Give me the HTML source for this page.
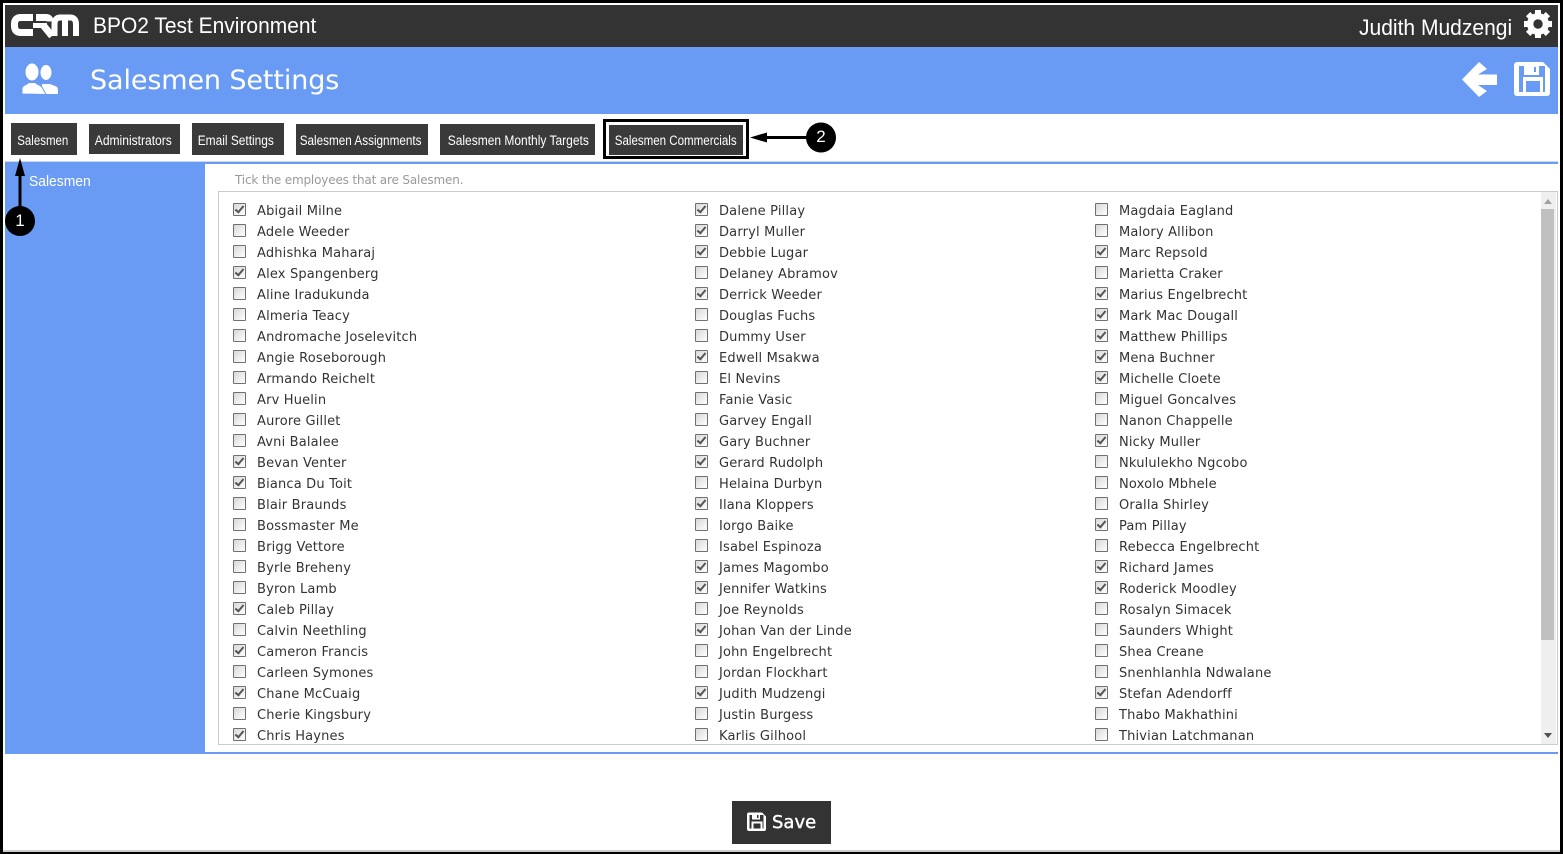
<!DOCTYPE html>
<html lang="en"><head><meta charset="utf-8"><title>Salesmen Settings</title>
<style>
html,body{margin:0;padding:0;background:#fff;overflow:hidden}
#p{position:relative;width:1563px;height:854px;overflow:hidden;background:#fff;font-family:"DejaVu Sans",Verdana,sans-serif}
.a{position:absolute}
.t{position:absolute;background:#3a3a3a;color:#fff;font:13.4px/30px "Liberation Sans",sans-serif;display:flex;justify-content:center;white-space:nowrap}
.t span{display:block;flex:none;transform:scaleX(.89)}
.n{transform-origin:0 50%;white-space:nowrap;color:#fff;font-family:"Liberation Sans",sans-serif}
.col{position:absolute}
.r{position:relative;height:21px;line-height:21px;font-size:13px;color:#333;white-space:nowrap;padding-left:24px;letter-spacing:.17px}
.r i{position:absolute;left:0;top:2px;width:11px;height:11px;border:1px solid #707070;background:linear-gradient(135deg,#d8d8d8,#fff);border-radius:1px}
.r.k i::after{content:"";position:absolute;left:3px;top:0;width:3px;height:7px;border:solid #555;border-width:0 2px 2px 0;transform:rotate(40deg)}
</style></head><body><div id="p">
<div class="a" style="left:0;top:0;width:1557px;height:847px;border:solid #000;border-width:3px 3px 0 3px"></div>
<div class="a" style="left:0;top:850px;width:1563px;height:2px;background:#ccc"></div>
<div class="a" style="left:0;top:852px;width:1563px;height:2px;background:#000"></div>
<div class="a" style="left:0;top:0;width:3px;height:854px;background:#000"></div>
<div class="a" style="left:1560px;top:0;width:3px;height:854px;background:#000"></div>
<div class="a" style="left:5px;top:5px;width:1553px;height:42px;background:#333"></div>
<div class="a" style="left:5px;top:47px;width:1553px;height:67px;background:#6a9bf4"></div>

<svg class="a" style="left:0;top:0" width="1563" height="854" viewBox="0 0 1563 854" fill="none">
<path d="M33 17.500H21q-6.500 0-6.500 6.500v2q0 6.500 6.500 6.500H33" stroke="#fff" stroke-width="7"/>
<path d="M36 17.500H46q4 0 4 4" stroke="#fff" stroke-width="7"/>
<path d="M33 25.500H47" stroke="#fff" stroke-width="5"/>
<path d="M43 25L52 36" stroke="#fff" stroke-width="7"/>
<path d="M54.500 36V24q0-6.500 6-6.500H70q6 0 6 6.500V36M65 18V36" stroke="#fff" stroke-width="6"/>
<g fill="#fff">
<ellipse cx="46" cy="72.500" rx="5.500" ry="7.500"/><path d="M42 94V84h8l5 2q3 1 3 4V94Z"/>
<ellipse cx="32" cy="72" rx="7" ry="9" stroke="#6a9bf4" stroke-width="1"/>
<path d="M22 94V89q0-3 4-4.500l3-2h6l3 2q4 1.500 5 4.500l3 5.500Z" stroke="#6a9bf4" stroke-width="1"/>
<polygon points="1462,79.500 1479,62 1487,69 1478,74.500 1497,74.500 1497,85 1478,85 1487,91 1479,97"/>
<path d="M1517 62H1543L1550 69V93a3 3 0 0 1-3 3H1517a3 3 0 0 1-3-3V65a3 3 0 0 1 3-3Z"/>
<rect x="1519" y="66" width="26" height="26" fill="#6a9bf4"/>
<rect x="1524" y="65" width="15" height="10"/><rect x="1534" y="67" width="2" height="5" fill="#6a9bf4"/>
<rect x="1523" y="77" width="20" height="16"/><rect x="1526" y="81" width="14" height="11" fill="#6a9bf4"/>
<rect x="1545" y="69" width="3" height="6"/>
</g>
<path d="M1538 10V38M1524 24H1552M1528.100 14.100L1547.900 33.900M1547.900 14.100L1528.100 33.900" stroke="#fff" stroke-width="6"/>
<circle cx="1538" cy="24" r="11" fill="#fff"/>
<circle cx="1538" cy="24" r="4.700" fill="#333"/>
</svg>

<div class="a n" style="left:93px;top:12px;font-size:22px;line-height:28px;transform:scaleX(.953)">BPO2 Test Environment</div>
<div class="a n" style="left:1359px;top:14px;font-size:22px;line-height:28px;transform:scaleX(.956)">Judith Mudzengi</div>
<div class="a" style="left:90px;top:63px;color:#fff;font-size:27px;line-height:36px;letter-spacing:-.12px;white-space:nowrap">Salesmen Settings</div>

<div class="t" style="left:11px;top:123px;width:66px;height:32px;line-height:35px"><span style="transform:translateX(-1px) scaleX(.857)">Salesmen</span></div>
<div class="t" style="left:89px;top:124px;width:91px;height:30px;line-height:33px"><span style="transform:translateX(-1.500px) scaleX(.90)">Administrators</span></div>
<div class="t" style="left:192px;top:123px;width:92px;height:32px;line-height:35px"><span style="transform:translateX(-2px) scaleX(.89)">Email Settings</span></div>
<div class="t" style="left:296px;top:124px;width:132px;height:31px;line-height:33px"><span style="transform:translateX(-1px) scaleX(.875)">Salesmen Assignments</span></div>
<div class="t" style="left:440px;top:124px;width:155px;height:31px;line-height:33px"><span style="transform:translateX(.500px) scaleX(.896)">Salesmen Monthly Targets</span></div>
<div class="t" style="left:609px;top:125px;width:134px;height:30px;line-height:31px"><span style="transform:scaleX(.862)">Salesmen Commercials</span></div>
<div class="a" style="left:603px;top:119px;width:140px;height:34px;border:3px solid #000"></div>

<div class="a" style="left:5px;top:161px;width:1553px;height:1px;background:#c9d6ee"></div>
<div class="a" style="left:5px;top:162px;width:1553px;height:2px;background:#6a9bf4"></div>
<div class="a" style="left:5px;top:164px;width:200px;height:589px;background:#6a9bf4"></div>
<div class="a" style="left:5px;top:752px;width:1553px;height:2px;background:#6a9bf4"></div>
<div class="a n" style="left:29px;top:172px;font-size:15px;line-height:20px;transform:scaleX(.925)">Salesmen</div>
<div class="a" style="left:235px;top:172px;color:#999;font-size:12px;line-height:17px;letter-spacing:-.16px;white-space:nowrap">Tick the employees that are Salesmen.</div>

<div class="a" style="left:218px;top:191px;width:1338px;height:552px;border:1px solid #ccc;overflow:hidden"></div>
<div class="a" style="left:219px;top:192px;width:1322px;height:552px;overflow:hidden">
<div class="col" style="left:14px;top:9px">
<div class="r k"><i></i>Abigail Milne</div>
<div class="r"><i></i>Adele Weeder</div>
<div class="r"><i></i>Adhishka Maharaj</div>
<div class="r k"><i></i>Alex Spangenberg</div>
<div class="r"><i></i>Aline Iradukunda</div>
<div class="r"><i></i>Almeria Teacy</div>
<div class="r"><i></i>Andromache Joselevitch</div>
<div class="r"><i></i>Angie Roseborough</div>
<div class="r"><i></i>Armando Reichelt</div>
<div class="r"><i></i>Arv Huelin</div>
<div class="r"><i></i>Aurore Gillet</div>
<div class="r"><i></i>Avni Balalee</div>
<div class="r k"><i></i>Bevan Venter</div>
<div class="r k"><i></i>Bianca Du Toit</div>
<div class="r"><i></i>Blair Braunds</div>
<div class="r"><i></i>Bossmaster Me</div>
<div class="r"><i></i>Brigg Vettore</div>
<div class="r"><i></i>Byrle Breheny</div>
<div class="r"><i></i>Byron Lamb</div>
<div class="r k"><i></i>Caleb Pillay</div>
<div class="r"><i></i>Calvin Neethling</div>
<div class="r k"><i></i>Cameron Francis</div>
<div class="r"><i></i>Carleen Symones</div>
<div class="r k"><i></i>Chane McCuaig</div>
<div class="r"><i></i>Cherie Kingsbury</div>
<div class="r k"><i></i>Chris Haynes</div>
</div>
<div class="col" style="left:476px;top:9px">
<div class="r k"><i></i>Dalene Pillay</div>
<div class="r k"><i></i>Darryl Muller</div>
<div class="r k"><i></i>Debbie Lugar</div>
<div class="r"><i></i>Delaney Abramov</div>
<div class="r k"><i></i>Derrick Weeder</div>
<div class="r"><i></i>Douglas Fuchs</div>
<div class="r"><i></i>Dummy User</div>
<div class="r k"><i></i>Edwell Msakwa</div>
<div class="r"><i></i>El Nevins</div>
<div class="r"><i></i>Fanie Vasic</div>
<div class="r"><i></i>Garvey Engall</div>
<div class="r k"><i></i>Gary Buchner</div>
<div class="r k"><i></i>Gerard Rudolph</div>
<div class="r"><i></i>Helaina Durbyn</div>
<div class="r k"><i></i>Ilana Kloppers</div>
<div class="r"><i></i>Iorgo Baike</div>
<div class="r"><i></i>Isabel Espinoza</div>
<div class="r k"><i></i>James Magombo</div>
<div class="r k"><i></i>Jennifer Watkins</div>
<div class="r"><i></i>Joe Reynolds</div>
<div class="r k"><i></i>Johan Van der Linde</div>
<div class="r"><i></i>John Engelbrecht</div>
<div class="r"><i></i>Jordan Flockhart</div>
<div class="r k"><i></i>Judith Mudzengi</div>
<div class="r"><i></i>Justin Burgess</div>
<div class="r"><i></i>Karlis Gilhool</div>
</div>
<div class="col" style="left:876px;top:9px">
<div class="r"><i></i>Magdaia Eagland</div>
<div class="r"><i></i>Malory Allibon</div>
<div class="r k"><i></i>Marc Repsold</div>
<div class="r"><i></i>Marietta Craker</div>
<div class="r k"><i></i>Marius Engelbrecht</div>
<div class="r k"><i></i>Mark Mac Dougall</div>
<div class="r k"><i></i>Matthew Phillips</div>
<div class="r k"><i></i>Mena Buchner</div>
<div class="r k"><i></i>Michelle Cloete</div>
<div class="r"><i></i>Miguel Goncalves</div>
<div class="r"><i></i>Nanon Chappelle</div>
<div class="r k"><i></i>Nicky Muller</div>
<div class="r"><i></i>Nkululekho Ngcobo</div>
<div class="r"><i></i>Noxolo Mbhele</div>
<div class="r"><i></i>Oralla Shirley</div>
<div class="r k"><i></i>Pam Pillay</div>
<div class="r"><i></i>Rebecca Engelbrecht</div>
<div class="r k"><i></i>Richard James</div>
<div class="r k"><i></i>Roderick Moodley</div>
<div class="r"><i></i>Rosalyn Simacek</div>
<div class="r"><i></i>Saunders Whight</div>
<div class="r"><i></i>Shea Creane</div>
<div class="r"><i></i>Snenhlanhla Ndwalane</div>
<div class="r k"><i></i>Stefan Adendorff</div>
<div class="r"><i></i>Thabo Makhathini</div>
<div class="r"><i></i>Thivian Latchmanan</div>
</div>
</div>

<div class="a" style="left:1541px;top:192px;width:15px;height:552px;background:#efefef"></div>
<div class="a" style="left:1541px;top:209px;width:13px;height:431px;background:#c0c0c0"></div>
<svg class="a" style="left:1541px;top:192px" width="15" height="552" fill="none">
<polygon points="3,12 11,12 7,7" fill="#a0a0a0"/><polygon points="3,541 11,541 7,546" fill="#505050"/>
</svg>

<svg class="a" style="left:0;top:110px" width="860" height="130" fill="none">
<path d="M20 62V100" stroke="#000" stroke-width="3"/>
<polygon points="15,66 25,66 20,48" fill="#000"/>
<circle cx="20" cy="111" r="15" fill="#000"/>
<path d="M760 27.500H810" stroke="#000" stroke-width="3"/>
<polygon points="750,27.500 767,22.500 767,32.500" fill="#000"/>
<circle cx="821" cy="27.500" r="15" fill="#000"/>
</svg>
<div class="a" style="left:5px;top:211px;width:30px;text-align:center;color:#fff;font:17px/20px 'Liberation Sans',sans-serif">1</div>
<div class="a" style="left:806px;top:127px;width:30px;text-align:center;color:#fff;font:17px/20px 'Liberation Sans',sans-serif">2</div>

<div class="a" style="left:732px;top:801px;width:99px;height:43px;background:#333"></div>
<svg class="a" style="left:747px;top:812px" width="20" height="20">
<path d="M2 0.500H15L19 4.500V17a2 2 0 0 1-2 2H2a2 2 0 0 1-2-2V2.500a2 2 0 0 1 2-2Z" fill="#fff"/>
<rect x="2.500" y="3" width="14" height="13.500" fill="#333"/>
<rect x="5" y="2" width="8" height="5.500" fill="#fff"/><rect x="10" y="3" width="1.500" height="3" fill="#333"/>
<rect x="4.500" y="9.500" width="11" height="8" fill="#fff"/><rect x="6.500" y="11.500" width="7" height="5" fill="#333"/>
</svg>
<div class="a" style="left:772px;top:811px;color:#fff;font-size:18px;line-height:24px;font-weight:500;-webkit-text-stroke:.4px #fff;white-space:nowrap">Save</div>
</div></body></html>
